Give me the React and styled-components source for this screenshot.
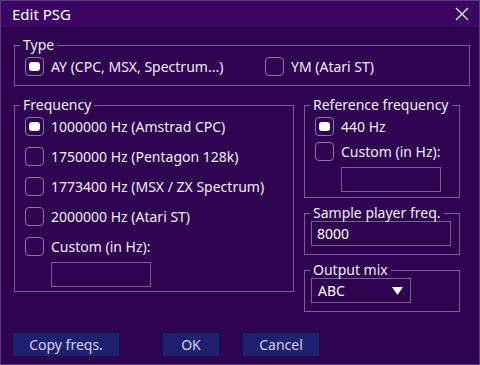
import React from 'react'
import styled, { createGlobalStyle } from 'styled-components'

const Global = createGlobalStyle`
    html, body { margin: 0; padding: 0; background: #2e0450; }
    * { box-sizing: border-box; }
`

const C = {
    title: '#3b0663',
    body: '#2e0450',
    line: '#7c5c9c',
    text: '#f2ecf8',
    btn: '#1f2170',
}

export default function App() {
    return (
        <Window>
            <Global />
            <TitleBar>
                <span>Edit PSG</span>
                <Close>
                    <svg width="14" height="14" viewBox="0 0 14 14">
                        <path d="M1 1 L13 13 M13 1 L1 13" stroke="#fff" strokeWidth="1.2" />
                    </svg>
                </Close>
            </TitleBar>
            <Body>
                <Group $w={456}>
                    <Legend>Type</Legend>
                    <TypeRow>
                        <Option checked label="AY (CPC, MSX, Spectrum...)" />
                        <Option label="YM (Atari ST)" />
                    </TypeRow>
                </Group>
                <Columns>
                    <Group $w={280}>
                        <Legend>Frequency</Legend>
                        <List $gap={12} $pad="4px 10px 4px 10px">
                            <Option checked label="1000000 Hz (Amstrad CPC)" />
                            <Option label="1750000 Hz (Pentagon 128k)" />
                            <Option label="1773400 Hz (MSX / ZX Spectrum)" />
                            <Option label="2000000 Hz (Atari ST)" />
                            <div>
                                <Option label="Custom (in Hz):" />
                                <Field $w={100} $ml={26} />
                            </div>
                        </List>
                    </Group>
                    <RightCol>
                        <Group $w={156}>
                            <Legend>Reference frequency</Legend>
                            <List $gap={7} $pad="4px 10px 5px 10px">
                                <Option checked label="440 Hz" />
                                <div>
                                    <Option label="Custom (in Hz):" />
                                    <Field $w={100} $ml={26} />
                                </div>
                            </List>
                        </Group>
                        <Group $w={156}>
                            <Legend>Sample player freq.</Legend>
                            <Inner>
                                <Field $w={140}>8000</Field>
                            </Inner>
                        </Group>
                        <Group $w={156}>
                            <Legend>Output mix</Legend>
                            <Inner>
                                <Select>
                                    ABC
                                    <svg width="11" height="8" viewBox="0 0 11 8">
                                        <path d="M0 0 H11 L5.5 8 Z" fill="#fff" />
                                    </svg>
                                </Select>
                            </Inner>
                        </Group>
                    </RightCol>
                </Columns>
                <Buttons>
                    <Button $w={108}>Copy freqs.</Button>
                    <Button $w={58} $ml={42}>OK</Button>
                    <Button $w={78} $ml={22}>Cancel</Button>
                </Buttons>
            </Body>
        </Window>
    )
}

function Option({ checked, label }) {
    return (
        <OptionRow>
            <Box>{checked && <Dot />}</Box>
            <span>{label}</span>
        </OptionRow>
    )
}

const Window = styled.div`
    width: 480px;
    height: 365px;
    background: ${C.body};
    border: 1px solid #5a3a7e;
    font-family: "Noto Sans", "DejaVu Sans", sans-serif;
    font-size: 14px;
    color: ${C.text};
    display: flex;
    flex-direction: column;
`

const TitleBar = styled.div`
    height: 26px;
    background: ${C.title};
    display: flex;
    align-items: center;
    justify-content: space-between;
    padding: 0 10px 0 11px;
    font-size: 15px;
    color: #fff;
`

const Close = styled.div`
    display: flex;
    align-items: center;
`

const Body = styled.div`
    flex: 1;
    padding: 10px 0 0 13px;
    display: flex;
    flex-direction: column;
`

const Group = styled.fieldset`
    width: ${p => p.$w}px;
    margin: 0;
    padding: 0;
    border: 1px solid ${C.line};
    min-width: 0;
`

const Legend = styled.legend`
    margin-left: 5px;
    padding: 0 3px;
    line-height: 16px;
    height: 16px;
    color: ${C.text};
`

const TypeRow = styled.div`
    display: grid;
    grid-template-columns: 240px 1fr;
    padding: 4px 10px 10px 10px;
`

const Columns = styled.div`
    display: flex;
    gap: 10px;
    margin-top: 11px;
    align-items: flex-start;
`

const RightCol = styled.div`
    display: flex;
    flex-direction: column;
    gap: 7px;
`

const List = styled.div`
    display: flex;
    flex-direction: column;
    gap: ${p => p.$gap}px;
    padding: ${p => p.$pad};
`

const Inner = styled.div`
    padding: 0 6px 8px 6px;
`

const OptionRow = styled.div`
    display: flex;
    align-items: center;
    gap: 7px;
    height: 18px;
`

const Box = styled.div`
    flex: none;
    width: 19px;
    height: 19px;
    border: 1px solid #8e74ab;
    border-radius: 4px;
    display: flex;
    align-items: center;
    justify-content: center;
`

const Dot = styled.div`
    width: 11px;
    height: 9px;
    background: #fff;
    border-radius: 3px;
`

const Field = styled.div`
    width: ${p => p.$w}px;
    height: 25px;
    margin-left: ${p => p.$ml || 0}px;
    margin-top: ${p => (p.$ml ? 7 : 0)}px;
    border: 1px solid #7a5c99;
    padding: 0 5px;
    display: flex;
    align-items: center;
    font-size: 14px;
    color: #fff;
`

const Select = styled.div`
    width: 100px;
    height: 25px;
    border: 1px solid #7a5c99;
    padding: 0 7px 0 6px;
    display: flex;
    align-items: center;
    justify-content: space-between;
    font-size: 14px;
    color: #fff;
`

const Buttons = styled.div`
    display: flex;
    margin-top: auto;
    margin-bottom: 7px;
    margin-left: -2px;
`

const Button = styled.div`
    width: ${p => p.$w}px;
    height: 25px;
    margin-left: ${p => p.$ml || 0}px;
    background: ${C.btn};
    border: 1px solid #170f4a;
    color: #d6d0ea;
    display: flex;
    align-items: center;
    justify-content: center;
    font-size: 14px;
`
